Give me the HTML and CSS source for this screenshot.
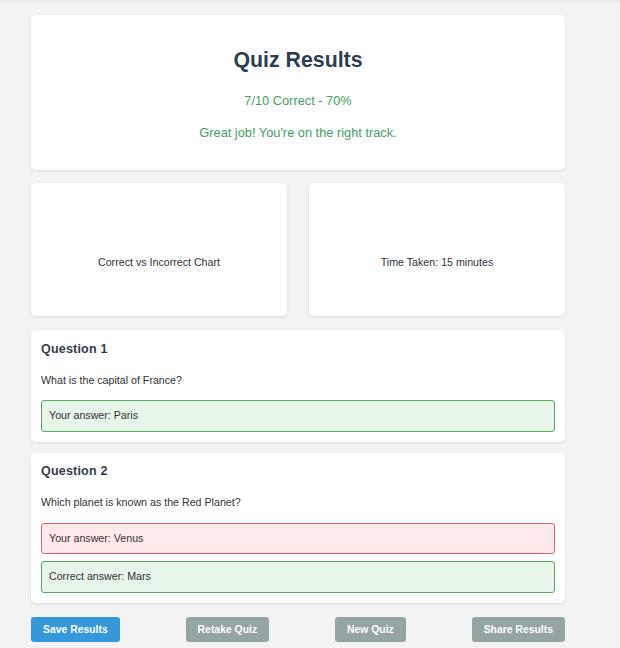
FILE: index.html
```html
<!DOCTYPE html>
<html lang="en">
<head>
<meta charset="utf-8">
<title>Quiz Results</title>
<link rel="stylesheet" href="styles.css">
</head>
<body>
<div class="page">
  <section class="card summary">
    <h1 class="title">Quiz Results</h1>
    <p class="score">7/10 Correct - 70%</p>
    <p class="message">Great job! You're on the right track.</p>
  </section>

  <div class="stats">
    <div class="card stat">Correct vs Incorrect Chart</div>
    <div class="card stat">Time Taken: 15 minutes</div>
  </div>

  <section class="card question">
    <h3 class="q-title">Question 1</h3>
    <p class="q-text">What is the capital of France?</p>
    <div class="answer correct">Your answer: Paris</div>
  </section>

  <section class="card question">
    <h3 class="q-title">Question 2</h3>
    <p class="q-text">Which planet is known as the Red Planet?</p>
    <div class="answer incorrect">Your answer: Venus</div>
    <div class="answer correct">Correct answer: Mars</div>
  </section>

  <div class="actions">
    <button class="btn primary">Save Results</button>
    <button class="btn secondary">Retake Quiz</button>
    <button class="btn secondary">New Quiz</button>
    <button class="btn secondary">Share Results</button>
  </div>
</div>
</body>
</html>
```
FILE: styles.css
```css
html {
  background: #f3f3f3;
}
body {
  margin: 0;
  border-top: 2px solid #e9e9e9;
  font-family: "Liberation Sans", Arial, sans-serif;
  color: #333;
}
.page {
  width: 534px;
  padding: 13px 0 0 31px;
}
.card {
  background: #fff;
  border-radius: 5px;
  box-shadow: 0 1px 3px rgba(0, 0, 0, 0.1);
}
.summary {
  text-align: center;
  padding: 33px 10px 30.5px;
  margin-bottom: 13px;
}
.title {
  margin: 0;
  font-size: 21.3px;
  line-height: 24px;
  font-weight: bold;
  color: #2c3e50;
}
.score {
  margin: 20.5px 0 0;
  font-size: 12.8px;
  line-height: 15px;
  color: #47a064;
}
.message {
  margin: 17px 0 0;
  font-size: 12.8px;
  line-height: 15px;
  color: #47a064;
}
.stats {
  display: flex;
  gap: 22px;
  margin-bottom: 14px;
}
.stat {
  flex: 1;
  text-align: center;
  font-size: 10.67px;
  line-height: 13px;
  padding: 72.5px 10px 47.5px;
}
.question {
  padding: 11.5px 10px 10px;
  margin-bottom: 11px;
}
.q-title {
  margin: 0;
  font-size: 12.5px;
  line-height: 15px;
  font-weight: bold;
  color: #333d48;
  letter-spacing: 0.2px;
}
.q-text {
  margin: 17px 0 13.5px;
  font-size: 10.67px;
  line-height: 13px;
}
.answer {
  height: 29.5px;
  line-height: 29.5px;
  padding: 0 7px;
  border-radius: 3px;
  font-size: 10.67px;
  color: #333;
}
.answer + .answer {
  margin-top: 7px;
}
.correct {
  background: #e8f5e9;
  border: 1px solid #5aab62;
}
.incorrect {
  background: #ffe9ea;
  border: 1px solid #d9656a;
}
.actions {
  display: flex;
  justify-content: space-between;
  margin-top: 14px;
}
.btn {
  height: 25px;
  padding: 0 12px;
  border: none;
  border-radius: 3px;
  font-family: "Liberation Sans", Arial, sans-serif;
  font-size: 10.4px;
  font-weight: bold;
  color: #fff;
}
.primary {
  background: #3498db;
}
.secondary {
  background: #95a5a6;
}
```
